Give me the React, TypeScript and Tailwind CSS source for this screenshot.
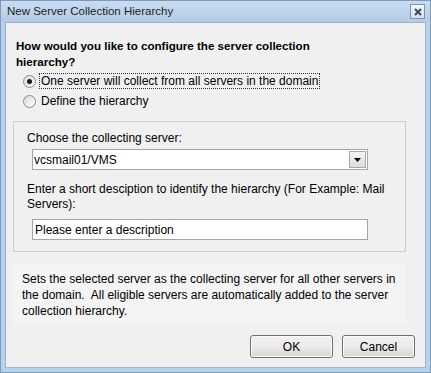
import React from "react";

const font = { fontFamily: '"Liberation Sans", Arial, sans-serif' };

const Radio = ({ checked }: { checked?: boolean }) => (
  <span className="flex h-[13px] w-[13px] items-center justify-center rounded-full border border-[#8a8a8a] bg-gradient-to-br from-[#d9d9d9] to-[#ffffff]">
    {checked && <span className="h-[5px] w-[5px] rounded-full bg-[#1a1a1a]" />}
  </span>
);

const Button = ({ label, w }: { label: string; w: string }) => (
  <button className={`flex h-[23px] ${w} items-center justify-center rounded-[3px] border border-[#707070] bg-gradient-to-b from-[#f2f2f2] via-[#ebebeb] to-[#d6d6d6] text-[12px] text-black shadow-[inset_0_0_0_1px_#fcfcfc]`}>
    {label}
  </button>
);

export default function App() {
  return (
    <div className="w-[431px] h-[373px] flex flex-col bg-[#b9d1ea] border border-[#7d9bbd] text-black" style={font}>
      <div className="flex h-[21px] items-center justify-between pl-[6px] pr-[5px] bg-gradient-to-b from-[#c9dcf0] to-[#b3cbe6]">
        <span className="text-[11.5px] text-[#1e1e1e]">New Server Collection Hierarchy</span>
        <span className="flex h-[15px] w-[15px] items-center justify-center border border-[#7f93ac] bg-gradient-to-b from-[#f4f7fb] to-[#d5dfeb]">
          <svg width="8" height="8" viewBox="0 0 8 8">
            <path d="M1 1 L7 7 M7 1 L1 7" stroke="#3c4a5c" strokeWidth="2" />
          </svg>
        </span>
      </div>
      <div className="mx-[4px] mb-[4px] flex-1 flex flex-col border border-[#9db4cf] bg-[#f0f0f0] pl-[7px] pr-[19px] pt-[15px]">
        <p className="pl-[3px] text-[11.6px] font-bold leading-[16px] -mr-[20px]">
          How would you like to configure the server collection
          <br />
          hierarchy?
        </p>
        <div className="mt-[3px] flex flex-col gap-[4px] pl-[10px]">
          <label className="flex h-[16px] items-center gap-[3px]">
            <Radio checked />
            <span className="border border-dotted border-[#333] px-[1px] text-[12px] leading-[14px]">
              One server will collect from all servers in the domain
            </span>
          </label>
          <label className="flex h-[16px] items-center gap-[5px]">
            <Radio />
            <span className="text-[12px] leading-[14px]">Define the hierarchy</span>
          </label>
        </div>
        <div className="mt-[12px] h-[131px] border border-[#cdcdcd] pl-[13px] pr-[37px] pt-[9px]">
          <p className="text-[12px] leading-[15px]">Choose the collecting server:</p>
          <div className="mt-[3px] ml-[5px] flex h-[21px] items-center border border-[#a5a5a5] bg-white pl-[1px] pr-[1px]">
            <span className="flex-1 text-[12px]">vcsmail01/VMS</span>
            <span className="flex h-[17px] w-[17px] items-center justify-center border border-[#a8a8a8] bg-gradient-to-b from-[#f3f3f3] to-[#dcdcdc]">
              <svg width="7" height="4" viewBox="0 0 7 4">
                <path d="M0 0 H7 L3.5 4 Z" fill="#000" />
              </svg>
            </span>
          </div>
          <p className="mt-[12px] text-[12px] leading-[15px] -mr-[36px]">
            Enter a short desciption to identify the hierarchy (For Example: Mail Servers):
          </p>
          <div className="mt-[7px] ml-[5px] flex h-[21px] items-center border border-[#a5a5a5] bg-white pl-[2px]">
            <span className="text-[12px]">Please enter a description</span>
          </div>
        </div>
        <div className="mt-[12px] h-[60px] bg-[#f4f4f4] pl-[9px] pr-[1px] pt-[7px] text-[12px] leading-[16px]">
          Sets the selected server as the collecting server for all other servers in the domain.&nbsp; All eligible servers are automatically added to the server collection hierarchy.
        </div>
        <div className="mt-[11px] flex justify-end gap-[9px] -mr-[9px]">
          <Button label="OK" w="w-[83px]" />
          <Button label="Cancel" w="w-[73px]" />
        </div>
      </div>
    </div>
  );
}
